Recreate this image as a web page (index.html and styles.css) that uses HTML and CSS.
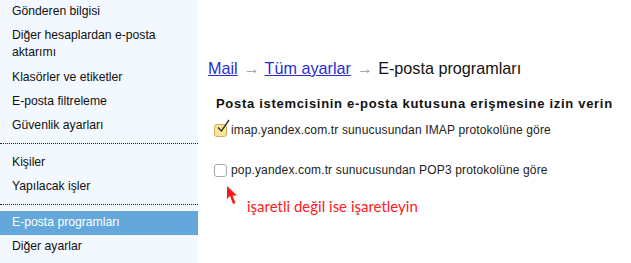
FILE: index.html
```html
<!DOCTYPE html>
<html lang="tr">
<head>
    <meta charset="UTF-8">
    <title>E-posta programları</title>
    <link rel="stylesheet" href="styles.css">
</head>
<body>
    <aside class="sidebar">
        <ul class="menu">
            <li><a href="#">Gönderen bilgisi</a></li>
            <li class="wide"><a href="#">Diğer hesaplardan e-posta aktarımı</a></li>
            <li><a href="#">Klasörler ve etiketler</a></li>
            <li><a href="#">E-posta filtreleme</a></li>
            <li><a href="#">Güvenlik ayarları</a></li>
        </ul>
        <ul class="menu">
            <li><a href="#">Kişiler</a></li>
            <li><a href="#">Yapılacak işler</a></li>
        </ul>
        <ul class="menu">
            <li class="active"><a href="#">E-posta programları</a></li>
            <li><a href="#">Diğer ayarlar</a></li>
        </ul>
    </aside>

    <main class="content">
        <h1 class="crumbs">
            <a href="#">Mail</a> <span class="arrow">→</span> <a href="#">Tüm ayarlar</a> <span class="arrow">→</span> E-posta programları
        </h1>

        <section class="options">
            <h2>Posta istemcisinin e-posta kutusuna erişmesine izin verin</h2>
            <label class="option">
                <span class="box checked">
                    <svg width="16" height="16" viewBox="0 0 16 16"><path d="M3 8.5 L6.5 12 L14 1" fill="none" stroke="#333" stroke-width="1.4"/></svg>
                </span>
                imap.yandex.com.tr sunucusundan IMAP protokolüne göre
            </label>
            <label class="option">
                <span class="box"></span>
                pop.yandex.com.tr sunucusundan POP3 protokolüne göre
            </label>
            <div class="hint">
                <svg class="pointer" width="12" height="19" viewBox="0 0 12 19"><path d="M1 0 L1 13 L4 10 L7 18 L9.5 17 L6.5 9.5 L11 9.5 Z" fill="#ff1a1a"/></svg>
                <span class="hint-text">işaretli değil ise işaretleyin</span>
            </div>
        </section>
    </main>
</body>
</html>
```

FILE: styles.css
```css
body {
    margin: 0;
    display: flex;
    height: 263px;
    overflow: hidden;
    font-family: Arial, "Liberation Sans", sans-serif;
    background: #ffffff;
}

/* sol menü */
.sidebar {
    width: 198px;
    flex-shrink: 0;
    background: #f2f8fd;
}

.menu {
    list-style: none;
    margin: 0;
    padding: 0;
}

.menu + .menu {
    border-top: 1px dotted #222;
    margin-top: 5px;
    padding-top: 7px;
}

.menu li {
    padding: 3px 12px 5px;
    font-size: 12.2px;
    line-height: 16px;
}

.menu li.wide {
    line-height: 17px;
}

.menu a {
    color: #111;
    text-decoration: none;
}

.menu + .menu + .menu {
    padding-top: 6px;
}

.menu li.active {
    background: #63a7db;
}

.menu li.active a {
    color: #fff;
}

/* içerik */
.content {
    flex: 1;
    padding: 57px 0 0 10px;
}

.crumbs {
    margin: 0;
    font-size: 16.2px;
    font-weight: normal;
    line-height: 22px;
    color: #111;
}

.crumbs a {
    color: #2b2bd6;
}

.crumbs .arrow {
    color: #999;
    padding: 0 1px;
}

.options {
    padding-left: 8px;
    margin-top: 17px;
}

.options h2 {
    margin: 0 0 10px;
    font-size: 13px;
    line-height: 16px;
    font-weight: bold;
    letter-spacing: 0.7px;
    color: #111;
}

.option {
    display: flex;
    align-items: center;
    gap: 4px;
    font-size: 12px;
    letter-spacing: 0.15px;
    line-height: 16px;
    color: #222;
    margin-bottom: 24px;
}

.box {
    position: relative;
    width: 11px;
    height: 11px;
    border: 1px solid #a9a9a9;
    border-radius: 3px;
    background: #fff;
    margin-left: -2px;
}

.box.checked {
    background: #fbe49b;
    border-color: #d2b35a;
}

.box svg {
    position: absolute;
    left: 0;
    top: -6px;
}

.hint {
    display: flex;
    align-items: flex-start;
    margin-top: -16px;
    padding-left: 10px;
}

.pointer {
    flex-shrink: 0;
}

.hint-text {
    margin: 11px 0 0 9px;
    font-family: Lato, "Open Sans", sans-serif;
    font-size: 15px;
    line-height: 18px;
    color: #ff2020;
}
```
